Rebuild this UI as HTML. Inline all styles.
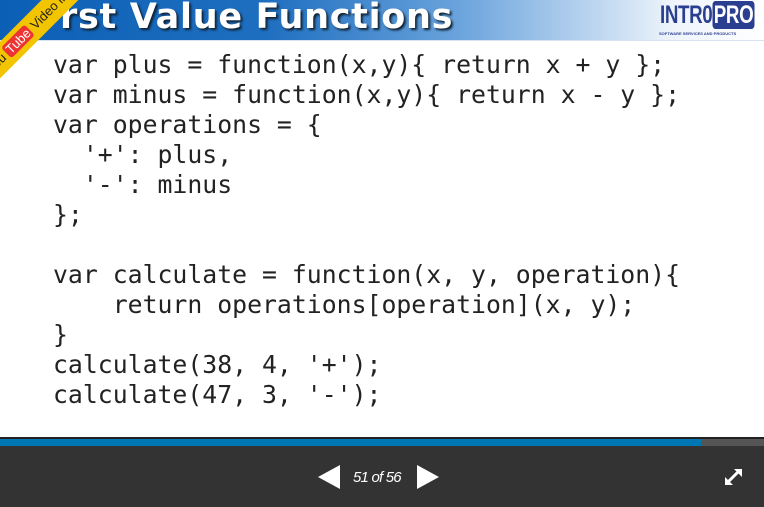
<!DOCTYPE html>
<html><head><style>
body{margin:0;width:764px;height:507px;overflow:hidden;background:#fff;position:relative;font-family:"Liberation Sans",sans-serif}
.hdr{position:absolute;left:0;top:0;width:764px;height:40px;background:linear-gradient(90deg,#0b5fb5 0%,#1f6fc0 35%,#6aa3dc 60%,#c6dcf2 80%,#eef4fb 88%,#fff 100%);border-bottom:1px solid #d5e3f3}
.title{position:absolute;left:60px;top:-3px;font:bold 35px "DejaVu Sans",sans-serif;color:#fff;text-shadow:2px 2px 2px #123;letter-spacing:0.7px}
.logo{position:absolute;left:660px;top:1px;font:bold 25px "Liberation Sans",sans-serif;color:#2a3f8f;letter-spacing:-0.5px;transform:scaleX(0.75);transform-origin:left}
.logo span{background:#2a3f8f;color:#fff;border-radius:4px;padding:0 2px}
.sub{position:absolute;left:659px;top:31px;font:bold 4px sans-serif;color:#2a3f8f;white-space:nowrap}
.ribbon{position:absolute;left:-38px;top:10px;width:150px;height:26px;background:#f3c400;transform:rotate(-45deg);transform-origin:center;font:13px "Liberation Sans",sans-serif;color:#222;text-align:center;line-height:26px}
pre{position:absolute;left:53px;top:50px;margin:0;font:24.8px/30px "DejaVu Sans Mono",monospace;color:#222}
.line{position:absolute;left:0;top:437px;width:764px;height:2px;background:#222}
.prog{position:absolute;left:0;top:439px;width:764px;height:7px;background:#555}
.prog div{width:701px;height:7px;background:#0077b5}
.bar{position:absolute;left:0;top:446px;width:764px;height:61px;background:#333}
.tl{position:absolute;left:318px;top:465px;width:0;height:0;border-top:12px solid transparent;border-bottom:12px solid transparent;border-right:22px solid #fff}
.tr{position:absolute;left:417px;top:465px;width:0;height:0;border-top:12px solid transparent;border-bottom:12px solid transparent;border-left:22px solid #fff}
.pg{position:absolute;left:353px;top:469px;font:italic 15px "Liberation Sans",sans-serif;color:#fff;letter-spacing:-0.8px}
</style></head><body>
<div class="hdr"><div class="title">rst Value Functions</div>
<div class="logo">INTR0<span>PRO</span></div><div class="sub">SOFTWARE SERVICES AND PRODUCTS</div></div>
<div class="ribbon">You <span style="background:#e33;color:#fff;border-radius:3px;padding:0 2px">Tube</span> Video inside.</div>
<pre>var plus = function(x,y){ return x + y };
var minus = function(x,y){ return x - y };
var operations = {
  '+': plus,
  '-': minus
};

var calculate = function(x, y, operation){
    return operations[operation](x, y);
}
calculate(38, 4, '+');
calculate(47, 3, '-');</pre>
<div class="line"></div>
<div class="prog"><div></div></div>
<div class="bar"></div>
<div class="tl"></div><div class="tr"></div>
<div class="pg">51 of 56</div>
<svg style="position:absolute;left:722px;top:466px" width="22" height="22" viewBox="0 0 22 22"><path d="M4 18L18 4" stroke="#fff" stroke-width="3"/><path d="M12 3h8v8z M3 11v8h8z" fill="#fff"/></svg>
</body></html>
